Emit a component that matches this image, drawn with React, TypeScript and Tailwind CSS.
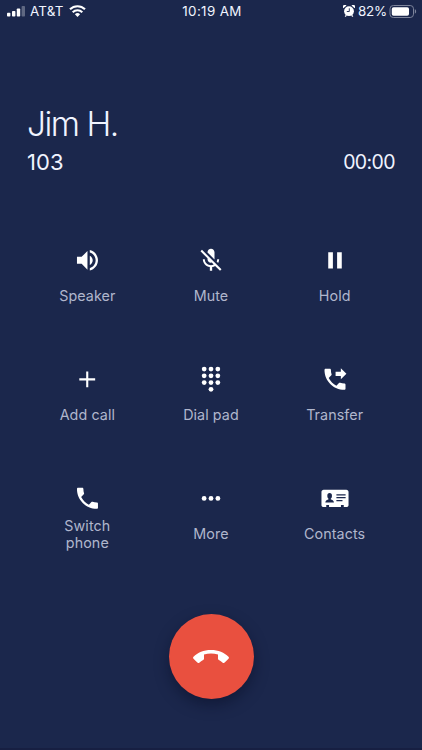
import type { ReactNode } from 'react';

const PHONE =
  'M6.62 10.79c1.44 2.83 3.76 5.14 6.59 6.59l2.2-2.2c.27-.27.67-.36 1.02-.24 1.12.37 2.33.57 3.57.57.55 0 1 .45 1 1V20c0 .55-.45 1-1 1-9.39 0-17-7.61-17-17 0-.55.45-1 1-1h3.5c.55 0 1 .45 1 1 0 1.25.2 2.45.57 3.57.11.35.03.74-.25 1.02l-2.2 2.2z';

function Icon({ children }: { children: ReactNode }) {
  return (
    <svg viewBox="0 -0.3 24 24" className="h-7 w-7 overflow-visible fill-white">
      {children}
    </svg>
  );
}

function Action({ label, children }: { label: string; children: ReactNode }) {
  return (
    <div className="flex flex-col items-center gap-1">
      {children}
      <div className="flex h-9 w-[74px] items-center justify-center text-center text-[14.3px] leading-[17.5px] tracking-[0.08px] text-[#b0b6cc]">
        <span>{label}</span>
      </div>
    </div>
  );
}

const dialDots = [
  [6.15, 3.2], [12, 3.2], [17.85, 3.2],
  [6.15, 9], [12, 9], [17.85, 9],
  [6.15, 14.8], [12, 14.8], [17.85, 14.8],
  [12, 20.5],
];

export default function App() {
  return (
    <div className="flex h-[750px] w-[422px] flex-col overflow-hidden border-b-2 border-[#171f42] bg-[#1b274c] font-['Inter','Liberation_Sans',sans-serif] text-[#f0f4ff]">
      <header className="grid h-[23px] grid-cols-3 items-center pl-[7px] pr-[5px] text-[13.4px] tracking-[0.35px]">
        <div className="flex items-center">
          <svg width="18" height="11" viewBox="0 0 18 11" fill="white">
            <rect x="0" y="6.8" width="3.4" height="3.7" rx=".8" />
            <rect x="5" y="5" width="3.4" height="5.5" rx=".8" />
            <rect x="9.8" y="2.5" width="3.4" height="8" rx=".8" />
            <rect x="14.6" y="0" width="3.4" height="10.5" rx=".8" opacity=".3" />
          </svg>
          <span className="ml-[5px] w-[34px] whitespace-nowrap tracking-[0.2px]">AT&amp;T</span>
          <svg width="17" height="12" viewBox="0 0 17 12" className="ml-[5px]" fill="none" stroke="white" strokeWidth="2.1">
            <path d="M1 4.3a10.7 10.7 0 0 1 15 0M3.7 7.2a6.8 6.8 0 0 1 9.6 0" />
            <path d="M8.5 12 5.9 9.3a3.7 3.7 0 0 1 5.2 0z" fill="white" stroke="none" />
          </svg>
        </div>
        <span className="whitespace-nowrap text-center">10:19 AM</span>
        <div className="flex items-center justify-end">
          <svg width="12" height="12" viewBox="0 0 12 12" fill="white">
            <path d="M.3 3.2A2 2 0 0 1 3.5.5zM11.7 3.2A2 2 0 0 0 8.5.5zM1.7 11.8l1-2 1.2.7-1 1.3zM10.3 11.8l-1-2-1.2.7 1 1.3z" />
            <circle cx="6" cy="6.2" r="4.9" />
            <path d="M6.3 3.3v3.2H3.8" fill="none" stroke="#1b274c" strokeWidth=".9" />
          </svg>
          <span className="ml-[3px] w-[31px] whitespace-nowrap tracking-[-0.2px]">82%</span>
          <svg width="28" height="13" viewBox="0 0 28 13">
            <rect x="1" y=".5" width="23.5" height="12" rx="3.3" fill="none" stroke="#7d849b" />
            <rect x="2.8" y="2.2" width="17.2" height="8.6" rx="1.8" fill="white" />
            <path d="M25.8 4.3c1.8.6 1.8 3.8 0 4.4z" fill="#7d849b" />
          </svg>
        </div>
      </header>

      <section className="mt-[79px] px-[27px]">
        <h1 className="h-[45px] text-[33.5px] font-[340] leading-[44px] tracking-[-1.5px]">Jim H.</h1>
        <div className="flex h-[31px] items-center justify-between">
          <span className="text-[22px] tracking-[0.1px]">103</span>
          <span className="text-[19.5px] tracking-[-0.6px]">00:00</span>
        </div>
      </section>

      <main className="mx-auto mt-[68px] grid w-[371px] grid-cols-3 gap-y-[51px]">
        <Action label="Speaker">
          <Icon>
            <path transform="translate(.4 0)" d="M3 9v6h4l5 5V4L7 9H3zm13.500 3c0-1.770-1.020-3.290-2.500-4.030v8.050c1.480-.730 2.500-2.250 2.500-4.020zM14 3.230v2.060c2.890.860 5 3.540 5 6.710s-2.110 5.850-5 6.710v2.060c4.010-.910 7-4.490 7-8.770s-2.990-7.860-7-8.770z" />
          </Icon>
        </Action>
        <Action label="Mute">
          <Icon>
            <path d="M19 11h-1.7c0 .74-.16 1.43-.43 2.05l1.23 1.23c.56-.98.9-2.09.9-3.28zm-4.02.17c0-.06.02-.11.02-.17V5c0-1.66-1.34-3-3-3S9 3.34 9 5v.18l5.98 5.99zM4.27 3 3 4.27l6.01 6.01V11c0 1.66 1.33 3 2.99 3 .22 0 .44-.03.65-.08l1.66 1.66c-.71.33-1.5.52-2.31.52-2.76 0-5.3-2.1-5.3-5.1H5c0 3.41 2.72 6.23 6 6.72V21h2v-3.28c.91-.13 1.77-.45 2.54-.9L19.73 21 21 19.73 4.27 3z" />
          </Icon>
        </Action>
        <Action label="Hold">
          <Icon>
            <path d="M6.2 5.1h4v13.8h-4zM13.800 5.100h4v13.800h-4z" />
          </Icon>
        </Action>
        <Action label="Add call">
          <Icon>
            <path d="M19 12.9h-5.9v5.9h-1.8v-5.9H5.400v-1.800h5.900V5.200h1.800v5.900H19z" />
          </Icon>
        </Action>
        <Action label="Dial pad">
          <Icon>
            {dialDots.map(([x, y]) => (
              <circle key={`${x}-${y}`} cx={x} cy={y} r="2.05" />
            ))}
          </Icon>
        </Action>
        <Action label="Transfer">
          <Icon>
            <path d={PHONE} />
            <path d="m21.8 7.2-4.8-4.8v3h-4.5v3.8H17v2.8z" />
          </Icon>
        </Action>
        <Action label="Switch phone">
          <Icon>
            <path transform="translate(.4 0)" d={PHONE} />
          </Icon>
        </Action>
        <Action label="More">
          <Icon>
            <circle cx="6.1" cy="12.1" r="2.05" />
            <circle cx="12" cy="12.1" r="2.05" />
            <circle cx="17.9" cy="12.1" r="2.05" />
          </Icon>
        </Action>
        <Action label="Contacts">
          <Icon>
            <path d="M2.3 4.7h19.4c1.1 0 1.9.8 1.9 1.9v11c0 1.1-.8 1.9-1.9 1.9h-2.2v-1.9h-2.4v1.9H6.9v-1.9H4.5v1.9H2.3c-1.1 0-1.9-.8-1.9-1.9v-11c0-1.1.8-1.9 1.9-1.9z" />
            <g fill="#1b274c">
              <ellipse cx="7.4" cy="9.9" rx="2" ry="2.4" />
              <path d="M3.7 15.6c0-2 1.8-2.5 2.8-2.9v-1.2h1.8v1.2c1 .4 2.8.9 2.8 2.9z" />
              <path d="M13.2 8.4h7.9v1.1h-7.9zM13.2 10.9h7.9V12h-7.9zM13.2 13.4h5.2v1.1h-5.2z" />
            </g>
          </Icon>
        </Action>
      </main>

      <button
        type="button"
        aria-label="End call"
        className="mx-auto mt-[62px] flex h-[85px] w-[85px] shrink-0 items-center justify-center rounded-full bg-[#e9503f] shadow-[0_6px_14px_rgba(8,14,38,0.5)]"
      >
        <svg width="36" height="14" viewBox="0 0 36 14" fill="white">
          <path d="M18 0C10.6 0 4.7 2.6.5 6.8c-.6.6-.6 1.4 0 2l3.8 3.8c.6.6 1.4.6 2 .1 1.2-1 2.4-1.9 3.8-2.6.6-.3.9-.8.9-1.4V4.4C15.4 3.1 20.6 3.1 25 4.4v4.3c0 .6.3 1.1.9 1.4 1.4.7 2.6 1.6 3.8 2.6.6.5 1.4.5 2-.1l3.8-3.8c.6-.6.6-1.4 0-2C31.3 2.6 25.4 0 18 0z" />
        </svg>
      </button>
    </div>
  );
}
